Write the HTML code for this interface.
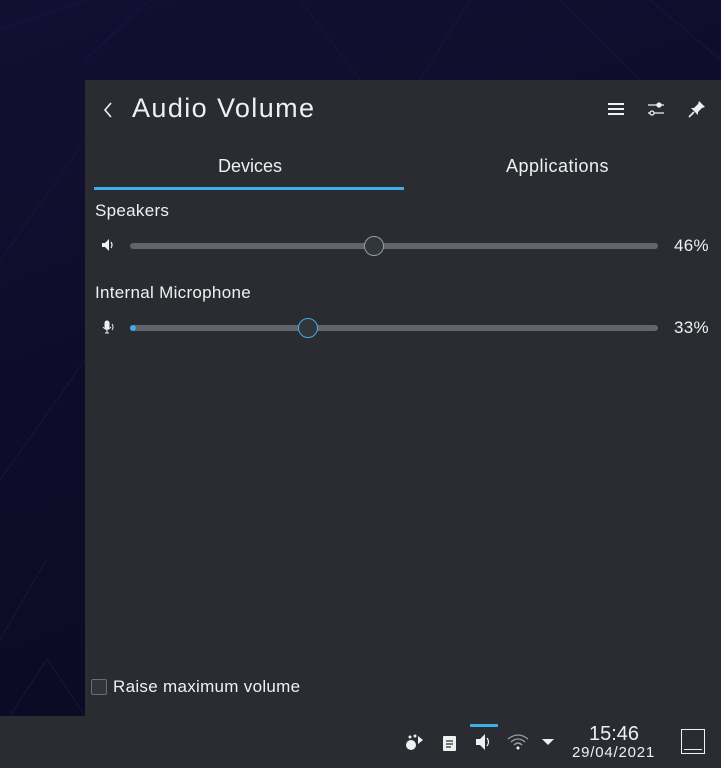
<!DOCTYPE html>
<html><head><meta charset="utf-8"><style>
*{margin:0;padding:0;box-sizing:border-box}
body{width:721px;height:768px;overflow:hidden;background:#2a2c31;font-family:"Liberation Sans",sans-serif;color:#eff0f1;position:relative}
.desk{position:absolute;left:0;top:0;width:721px;height:716px;background:linear-gradient(160deg,#130f33 0%,#0d0b26 60%,#0b0a22 100%)}
.panel{position:absolute;left:85px;top:80px;width:636px;height:636px;background:#2a2c31}
.t{position:absolute;white-space:nowrap}
.l{letter-spacing:0.3px}
.track{position:absolute;height:6px;border-radius:3px;background:#63656a}
.knob{position:absolute;width:20px;height:20px;border-radius:50%;background:#31363b;border:1px solid #9a9ca0}
.bar{position:absolute;left:0;top:716px;width:721px;height:52px;background:#2a2c31}
</style></head><body>
<div class="desk">
<svg width="721" height="716" style="position:absolute;left:0;top:0" stroke="#19163d" stroke-width="1" fill="none">
<path d="M0 260 L100 120 M0 480 L85 360 M46 560 L0 640 M47 659 L85 716 M47 659 L10 716 M0 30 L85 0 M150 0 L85 60 M300 0 L360 80 M470 0 L420 80 M560 0 L640 80 M650 0 L721 60"/>
</svg>
</div>
<div class="panel">
<svg class="t" style="left:17px;top:21px" width="12" height="18"><path d="M9 2 L3 9 L9 16" stroke="#eff0f1" stroke-width="1.6" fill="none"/></svg>
<div class="t" style="left:47px;top:13px;font-size:27px;letter-spacing:1.4px">Audio Volume</div>
<svg class="t" style="left:522px;top:22px" width="18" height="14"><path d="M1 2H17M1 7H17M1 12H17" stroke="#eff0f1" stroke-width="2"/></svg>
<svg class="t" style="left:562px;top:19px" width="18" height="20" fill="none" stroke="#eff0f1" stroke-width="1.3"><path d="M1 6H17M1 14H17"/><circle cx="12" cy="6" r="2" fill="#eff0f1"/><circle cx="5" cy="14" r="2" fill="#2a2c31"/></svg>
<svg class="t" style="left:603px;top:20px" width="18" height="18"><path d="M11 1 L17 7 L14 8 L10 12 L10 15 L3 8 L6 8 L10 4 Z" fill="#eff0f1"/><path d="M6 12 L1 17" stroke="#eff0f1" stroke-width="1.6"/></svg>
<div class="t" style="left:133px;top:76px;font-size:18px">Devices</div>
<div class="t" style="left:421px;top:76px;font-size:18px;letter-spacing:0.5px">Applications</div>
<div class="t" style="left:9px;top:107px;width:310px;height:3px;background:#3daee9"></div>
<div class="t l" style="left:10px;top:121px;font-size:17px">Speakers</div>
<svg class="t" style="left:16px;top:158px" width="14" height="14"><path d="M1 5H4L8 1V13L4 9H1Z" fill="#eff0f1"/><path d="M10 4Q12 7 10 10" stroke="#eff0f1" stroke-width="1.2" fill="none"/></svg>
<div class="track" style="left:45px;top:163px;width:528px"></div>
<div class="knob" style="left:279px;top:156px"></div>
<div class="t l" style="left:589px;top:156px;font-size:17px">46%</div>
<div class="t l" style="left:10px;top:203px;font-size:17px">Internal Microphone</div>
<svg class="t" style="left:16px;top:240px" width="14" height="14" fill="none" stroke="#eff0f1"><rect x="4" y="1" width="4" height="8" rx="2" fill="#eff0f1"/><path d="M2 7Q6 12 10 7M6 10V13M4 13H8"/><path d="M11 4Q13 7 11 10"/></svg>
<div class="track" style="left:45px;top:245px;width:528px"></div>
<div style="position:absolute;left:45px;top:245px;width:6px;height:6px;border-radius:3px;background:#3daee9"></div>
<div class="knob" style="left:213px;top:238px;border-color:#3daee9"></div>
<div class="t l" style="left:589px;top:238px;font-size:17px">33%</div>
<div class="t" style="left:6px;top:599px;width:16px;height:16px;border:1px solid #6a6c70;border-radius:2px;background:#31363b"></div>
<div class="t l" style="left:28px;top:597px;font-size:17px">Raise maximum volume</div>
</div>
<div class="bar">
<div class="t" style="left:470px;top:8px;width:28px;height:3px;background:#3daee9"></div>
<svg class="t" style="left:405px;top:17px" width="20" height="18" fill="#eff0f1"><circle cx="6" cy="12" r="5"/><circle cx="5" cy="4" r="1.5"/><circle cx="10" cy="3" r="1.5"/><path d="M13 3L18 7L13 11Z"/></svg>
<svg class="t" style="left:442px;top:18px" width="16" height="18"><rect x="1" y="2" width="13" height="15" rx="1" fill="#eff0f1"/><path d="M4 7H11M4 10H11M4 13H9" stroke="#2a2c31" stroke-width="1.2"/></svg>
<svg class="t" style="left:475px;top:17px" width="18" height="18"><path d="M1 6H5L10 1V17L5 12H1Z" fill="#eff0f1"/><path d="M12 5Q15 9 12 13" stroke="#eff0f1" stroke-width="1.2" fill="none"/></svg>
<svg class="t" style="left:507px;top:17px" width="22" height="18" fill="none" stroke="#9a9ca0" stroke-width="1.3"><path d="M1 6Q11 -2 21 6M4 9Q11 3 18 9M7 12Q11 8 15 12"/><circle cx="11" cy="15" r="1.5" fill="#eff0f1" stroke="none"/></svg>
<svg class="t" style="left:541px;top:22px" width="14" height="8"><path d="M1 1H13L7 7Z" fill="#eff0f1"/></svg>
<div class="t" style="left:589px;top:7px;font-size:20px">15:46</div>
<div class="t" style="left:572px;top:28px;font-size:15px;letter-spacing:0.8px">29/04/2021</div>
<div class="t" style="left:681px;top:13px;width:24px;height:25px;border:1px solid #eff0f1"></div>
<div class="t" style="left:684px;top:33px;width:18px;height:1px;background:#eff0f1"></div>
</div>
</body></html>
